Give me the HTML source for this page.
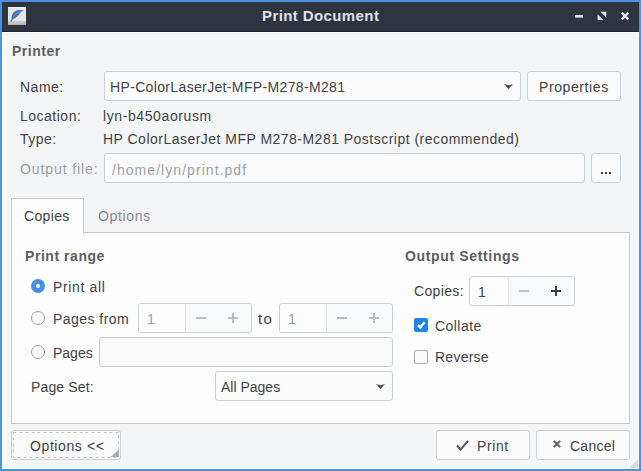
<!DOCTYPE html>
<html><head><meta charset="utf-8">
<style>
*{margin:0;padding:0;box-sizing:border-box;}
html,body{width:641px;height:471px;overflow:hidden;background:#4b91e2;}
body{position:relative;font-family:"Liberation Sans",sans-serif;font-size:14px;color:#404245;}
.abs{position:absolute;}
.t{position:absolute;white-space:nowrap;line-height:16px;height:16px;}
.b{font-weight:bold;}
#win{position:absolute;left:2px;top:2px;width:637px;height:467px;background:#f4f5f7;overflow:hidden;}
#title{position:absolute;left:0;top:0;width:637px;height:30px;background:#2f3441;border-bottom:1px solid #22262e;}
.box{position:absolute;border:1px solid #c8cfdc;border-radius:3px;background:#fcfcfd;}
.btn{position:absolute;border:1px solid #c9cfdc;border-radius:3px;background:#fbfbfc;}
.gray{color:#9b9fa5;}
.hd{color:#5c5e61;font-weight:bold;}
</style></head><body>
<div id="win">
  <div id="title">
    <!-- app icon -->
    <div class="abs" style="left:6px;top:5px;width:18px;height:18px;background:#e5e5e5;border-top:1px solid #f2f2f2;">
      <div class="abs" style="left:0;top:13px;width:18px;height:4px;background:linear-gradient(#d0d0d0,#b3b3b3);"></div>
      <svg class="abs" style="left:0;top:-1px" width="18" height="18" viewBox="0 0 18 18"><path d="M3.6 12.2 C3 8 6 3.8 10 3.1 C12 2.8 14 2.9 15.9 3.3 C13.5 4.2 12 6 10.4 8.2 C9 10 6.5 11.6 4.2 12.4 Z" fill="#4677b8"/><path d="M6 9 C8 7 10 5 13 4" stroke="#7a9fd0" stroke-width="0.6" fill="none"/><path d="M2.8 14.6 L4.4 12" stroke="#777" stroke-width="1.4"/></svg>
    </div>
    <div class="t b" style="left:260px;top:6px;color:#dfe2e8;font-size:15px;letter-spacing:0.4px;">Print Document</div>
    <!-- minimize -->
    <div class="abs" style="left:573px;top:13px;width:8px;height:2px;background:#dfe2e8;"></div><div class="abs" style="left:573px;top:15px;width:8px;height:1px;background:#9a9ea6;"></div>
    <!-- maximize -->
    <svg class="abs" style="left:595px;top:9px" width="10" height="10" viewBox="0 0 10 10"><path d="M3.3 0.8 L9.3 0.8 L9.3 6.8 Z" fill="#dfe2e8"/><path d="M0.6 3.2 L0.6 9 L6.4 9 Z" fill="#dfe2e8"/></svg>
    <!-- close -->
    <svg class="abs" style="left:618px;top:9px" width="10" height="10" viewBox="0 0 10 10"><path d="M1.7 1.7 L8.3 8.3 M8.3 1.7 L1.7 8.3" stroke="#dfe2e8" stroke-width="2.5"/></svg>
  </div>
  <div class="abs" style="left:0;top:30px;width:637px;height:1px;background:#fdfdfd;"></div>
  <div class="abs" style="left:0;top:30px;width:1px;height:437px;background:#fdfdfd;"></div>
  <div class="abs" style="left:636px;top:30px;width:1px;height:437px;background:#fdfdfd;"></div>
  <div class="abs" style="left:0;top:466px;width:637px;height:1px;background:#fdfdfd;"></div>

  <!-- Printer section -->
  <div class="t hd" style="left:10px;top:41px;letter-spacing:0.5px;">Printer</div>
  <div class="t" style="left:18px;top:77px;letter-spacing:0.5px;">Name:</div>
  <div class="box" style="left:102px;top:69px;width:417px;height:30px;"></div>
  <div class="t" style="left:108px;top:77px;letter-spacing:0.35px;">HP-ColorLaserJet-MFP-M278-M281</div>
  <svg class="abs" style="left:502px;top:82px" width="9" height="5" viewBox="0 0 9 5"><path d="M0 0 L4.5 1.3 L9 0 L4.5 5 Z" fill="#45474a"/></svg>
  <div class="btn" style="left:525px;top:69px;width:94px;height:30px;"></div>
  <div class="t" style="left:537px;top:77px;letter-spacing:0.6px;">Properties</div>

  <div class="t" style="left:18px;top:106px;letter-spacing:0.5px;">Location:</div>
  <div class="t" style="left:101px;top:106px;letter-spacing:0.6px;">lyn-b450aorusm</div>
  <div class="t" style="left:18px;top:129px;letter-spacing:0.5px;">Type:</div>
  <div class="t" style="left:101px;top:129px;letter-spacing:0.48px;">HP ColorLaserJet MFP M278-M281 Postscript (recommended)</div>
  <div class="t gray" style="left:18px;top:159px;letter-spacing:0.9px;">Output file:</div>
  <div class="box" style="left:102px;top:151px;width:481px;height:30px;"></div>
  <div class="t gray" style="left:110px;top:160px;letter-spacing:1.05px;">/home/lyn/print.pdf</div>
  <div class="btn" style="left:589px;top:151px;width:30px;height:30px;"></div>
  <div class="abs" style="left:599px;top:170px;width:2px;height:2px;background:#3a3c3f;"></div><div class="abs" style="left:603px;top:170px;width:2px;height:2px;background:#3a3c3f;"></div><div class="abs" style="left:607px;top:170px;width:2px;height:2px;background:#3a3c3f;"></div>

  <!-- tabs -->
  <div class="abs" style="left:9px;top:230px;width:619px;height:192px;background:#fefefe;border:1px solid #c8cacd;"></div>
  <div class="abs" style="left:9px;top:196px;width:73px;height:36px;background:#fefefe;border:1px solid #c8cacd;border-bottom:none;"></div>
  <div class="t" style="left:22px;top:206px;letter-spacing:0.35px;">Copies</div>
  <div class="t" style="left:96px;top:206px;letter-spacing:0.65px;color:#86888c;">Options</div>

  <!-- Print range -->
  <div class="t hd" style="left:23px;top:246px;letter-spacing:0.55px;">Print range</div>
  <div class="abs" style="left:29px;top:277px;width:14px;height:14px;border-radius:50%;background:#4a8fe2;"></div>
  <div class="abs" style="left:34px;top:282px;width:4px;height:4px;border-radius:50%;background:#fff;"></div>
  <div class="t" style="left:51px;top:277px;letter-spacing:0.65px;">Print all</div>

  <div class="abs" style="left:29px;top:309px;width:14px;height:14px;border-radius:50%;background:#fafafa;border:1px solid #9c9ea2;"></div>
  <div class="t" style="left:51px;top:309px;letter-spacing:0.45px;">Pages from</div>
  <div class="box" style="left:136px;top:301px;width:114px;height:30px;background:#f9fafb;"></div>
  <div class="abs" style="left:137px;top:302px;width:47px;height:28px;background:#fdfdfd;border-right:1px solid #dfe2e8;border-radius:2px 0 0 2px;"></div>
  <div class="t gray" style="left:145px;top:309px;">1</div>
  <div class="abs" style="left:194px;top:315px;width:10px;height:2px;background:#b9bcc0;"></div>
  <div class="abs" style="left:226px;top:315px;width:10px;height:2px;background:#b9bcc0;"></div>
  <div class="abs" style="left:230px;top:311px;width:2px;height:10px;background:#b9bcc0;"></div>
  <div class="t" style="left:256px;top:309px;font-size:15px;letter-spacing:1.4px;">to</div>
  <div class="box" style="left:277px;top:301px;width:114px;height:30px;background:#f9fafb;"></div>
  <div class="abs" style="left:278px;top:302px;width:47px;height:28px;background:#fdfdfd;border-right:1px solid #dfe2e8;border-radius:2px 0 0 2px;"></div>
  <div class="t gray" style="left:286px;top:309px;">1</div>
  <div class="abs" style="left:335px;top:315px;width:10px;height:2px;background:#b9bcc0;"></div>
  <div class="abs" style="left:367px;top:315px;width:10px;height:2px;background:#b9bcc0;"></div>
  <div class="abs" style="left:371px;top:311px;width:2px;height:10px;background:#b9bcc0;"></div>

  <div class="abs" style="left:29px;top:343px;width:14px;height:14px;border-radius:50%;background:#fafafa;border:1px solid #9c9ea2;"></div>
  <div class="t" style="left:51px;top:343px;">Pages</div>
  <div class="box" style="left:97px;top:335px;width:294px;height:30px;"></div>

  <div class="t" style="left:29px;top:377px;letter-spacing:0.15px;">Page Set:</div>
  <div class="box" style="left:213px;top:369px;width:178px;height:30px;"></div>
  <div class="t" style="left:219px;top:377px;">All Pages</div>
  <svg class="abs" style="left:374px;top:382px" width="9" height="5" viewBox="0 0 9 5"><path d="M0 0 L4.5 1.3 L9 0 L4.5 5 Z" fill="#45474a"/></svg>

  <!-- Output settings -->
  <div class="t hd" style="left:403px;top:246px;letter-spacing:0.65px;">Output Settings</div>
  <div class="t" style="left:412px;top:281px;letter-spacing:0.35px;">Copies:</div>
  <div class="box" style="left:467px;top:274px;width:106px;height:30px;background:#f9fafb;"></div>
  <div class="abs" style="left:468px;top:275px;width:39px;height:28px;background:#fdfdfd;border-right:1px solid #dfe2e8;border-radius:2px 0 0 2px;"></div>
  <div class="t" style="left:476px;top:282px;">1</div>
  <div class="abs" style="left:517px;top:288px;width:10px;height:2px;background:#bfc2c6;"></div>
  <div class="abs" style="left:549px;top:288px;width:10px;height:2px;background:#3a3c40;"></div>
  <div class="abs" style="left:553px;top:284px;width:2px;height:10px;background:#3a3c40;"></div>

  <div class="abs" style="left:412px;top:316px;width:14px;height:14px;border-radius:2px;background:#1c84f2;"></div>
  <svg class="abs" style="left:412px;top:316px" width="14" height="14" viewBox="0 0 14 14"><path d="M3.9 7.1 L6.2 9.4 L10.6 4.3" stroke="#fff" stroke-width="2.4" fill="none"/></svg>
  <div class="t" style="left:433px;top:316px;letter-spacing:0.45px;">Collate</div>
  <div class="abs" style="left:412px;top:348px;width:14px;height:14px;border-radius:2px;background:#fafafa;border:1px solid #a9abaf;"></div>
  <div class="t" style="left:433px;top:347px;letter-spacing:0.25px;">Reverse</div>

  <!-- bottom buttons -->
  <div class="btn" style="left:9px;top:428px;width:110px;height:30px;"></div>
  <svg class="abs" style="left:11px;top:430px" width="106" height="26" viewBox="0 0 106 26"><rect x="0.5" y="0.5" width="105" height="25" fill="none" stroke="#c3c5c9" stroke-width="1" stroke-dasharray="3 3"/></svg>
  <svg class="abs" style="left:109px;top:447px" width="8" height="8" viewBox="0 0 8 8"><path d="M8 0 L8 8 L0 8 Z" fill="#a9abaf"/></svg>
  <div class="t" style="left:28px;top:436px;letter-spacing:0.6px;">Options &lt;&lt;</div>

  <div class="btn" style="left:434px;top:428px;width:94px;height:30px;"></div>
  <svg class="abs" style="left:454px;top:438px" width="13" height="11" viewBox="0 0 13 11"><path d="M1 5.5 L4.5 9.5 L12 1" stroke="#56585c" stroke-width="1.9" fill="none"/></svg>
  <div class="t" style="left:475px;top:436px;letter-spacing:0.6px;">Print</div>
  <div class="btn" style="left:534px;top:428px;width:94px;height:30px;"></div>
  <svg class="abs" style="left:551px;top:438px" width="8" height="8" viewBox="0 0 8 8"><path d="M0.8 0.8 L7.2 7.2 M7.2 0.8 L0.8 7.2" stroke="#56585c" stroke-width="1.9"/></svg>
  <div class="t" style="left:568px;top:436px;letter-spacing:0.25px;">Cancel</div>
  <svg class="abs" style="left:627px;top:457px" width="9" height="9" viewBox="0 0 9 9"><path d="M9 0 L9 9 L0 9 Z" fill="#dcdde0"/></svg>
</div>
</body></html>
